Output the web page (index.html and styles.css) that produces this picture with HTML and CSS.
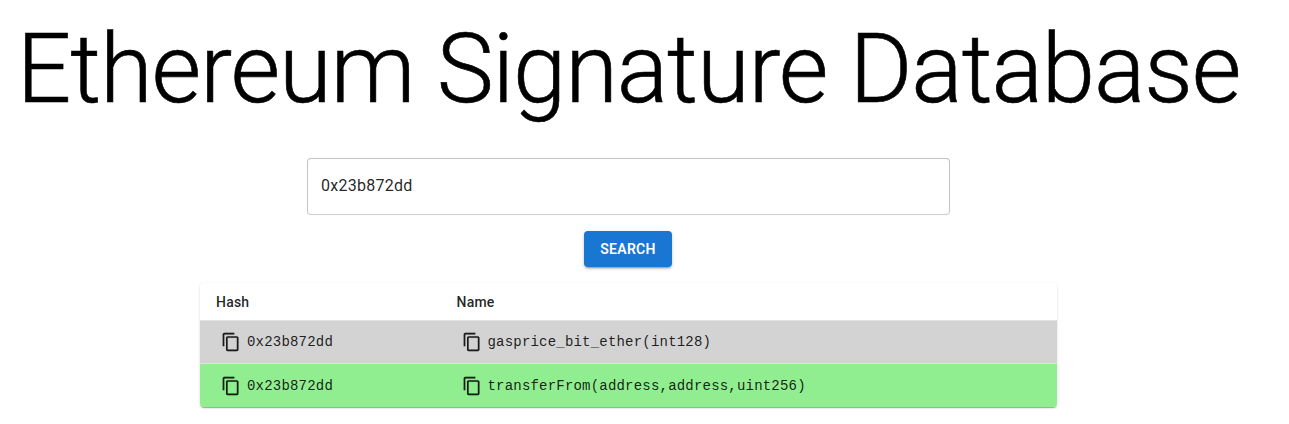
FILE: index.html
```html
<!DOCTYPE html>
<html lang="en">
<head>
<meta charset="utf-8">
<title>Ethereum Signature Database</title>
<link rel="stylesheet" href="styles.css">
</head>
<body>
<svg class="defs" width="0" height="0"><symbol id="copy" viewBox="0 0 24 24"><path d="M16 1H4c-1.100 0-2 .9-2 2v14h2V3h12V1zm3 4H8c-1.100 0-2 .9-2 2v14c0 1.100.9 2 2 2h11c1.100 0 2-.9 2-2V7c0-1.100-.9-2-2-2zm0 16H8V7h11v14z"/></symbol></svg>
<main class="page">
<h1 class="title">Ethereum Signature Database</h1>
<form class="search">
<input class="field" type="text" value="0x23b872dd">
<button class="button" type="button">SEARCH</button>
</form>
<div class="table">
<div class="row head"><div class="cell">Hash</div><div class="cell">Name</div></div>
<div class="row gray"><div class="cell"><svg class="icon"><use href="#copy"/></svg><span>0x23b872dd</span></div><div class="cell"><svg class="icon"><use href="#copy"/></svg><span>gasprice_bit_ether(int128)</span></div></div>
<div class="row green"><div class="cell"><svg class="icon"><use href="#copy"/></svg><span>0x23b872dd</span></div><div class="cell"><svg class="icon"><use href="#copy"/></svg><span>transferFrom(address,address,uint256)</span></div></div>
</div>
</main>
</body>
</html>
```
FILE: styles.css
```css
* { box-sizing: border-box; }
body { margin: 0; background: #fff; font-family: Roboto, "Liberation Sans", sans-serif; color: rgba(0,0,0,.87); }
.defs { display: block; height: 0; }
.page { width: 1257px; height: 424px; display: flex; flex-direction: column; align-items: center; overflow: hidden; }
.title { margin: 13px 0 33px; font-size: 96px; line-height: 112px; font-weight: 300; letter-spacing: -1.13px; white-space: nowrap; color: #000; -webkit-text-stroke: .6px #000; }
.search { display: flex; flex-direction: column; align-items: center; }
.field { width: 643px; height: 57px; border: 1px solid #c4c4c4; border-bottom-color: #ccc; border-radius: 4px; padding: 0 14px 2px 13px; font: 400 16px Roboto, sans-serif; letter-spacing: .25px; color: rgba(0,0,0,.87); outline: none; }
.button { margin: 16px 1px 0 0; width: 88px; height: 36px; border: 0; border-radius: 4px; background: #1976d2; color: #fff; font: 600 14px Roboto, sans-serif; letter-spacing: .3px; box-shadow: 0 3px 1px -2px rgba(0,0,0,.2), 0 2px 2px rgba(0,0,0,.14), 0 1px 5px rgba(0,0,0,.12); }
.table { margin-top: 16px; width: 857px; border-radius: 4px; overflow: hidden; box-shadow: 0 2px 1px -1px rgba(0,0,0,.2), 0 1px 1px rgba(0,0,0,.14), 0 1px 3px rgba(0,0,0,.12); }
.row { display: grid; grid-template-columns: 240.500px 1fr; height: 43px; border-bottom: 1px solid #e0e0e0; }
.head { height: 38px; font-size: 14px; font-weight: 500; letter-spacing: .2px; }
.cell { display: flex; align-items: center; padding: 0 16px; }
.gray { background: #d3d3d3; height: 43px; }
.green { background: #90ee90; border-bottom: 0; }
.row .icon { width: 20px; height: 20px; margin: 0 6px 0 5px; fill: currentColor; stroke: currentColor; stroke-width: .1px; }
.cell span { font: 14px "Liberation Mono", monospace; letter-spacing: .2px; }
```
